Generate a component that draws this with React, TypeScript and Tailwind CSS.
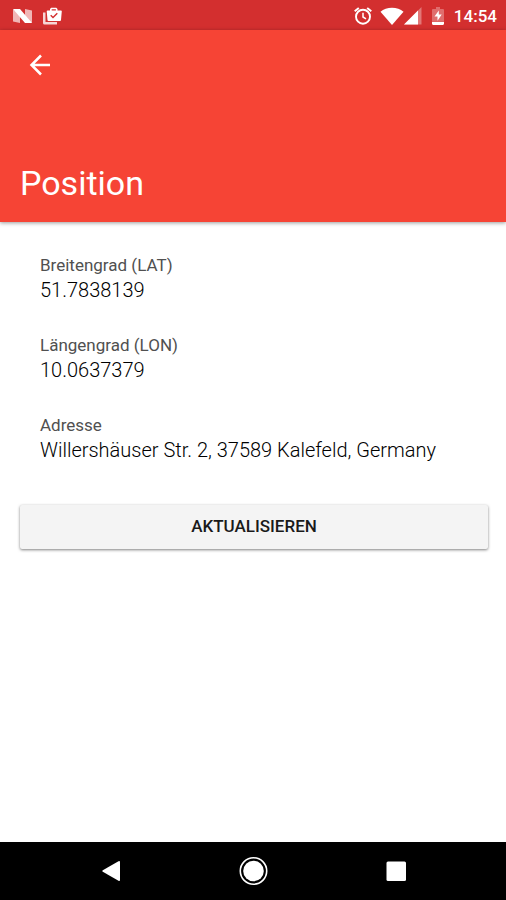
import type { ReactNode } from 'react'

// ── Data ──────────────────────────────────────────────────────────────────────

const fields = [
  { label: 'Breitengrad (LAT)', value: '51.7838139' },
  { label: 'Längengrad (LON)', value: '10.0637379' },
  { label: 'Adresse', value: 'Willershäuser Str. 2, 37589 Kalefeld, Germany' },
]

// ── Status bar ────────────────────────────────────────────────────────────────

function NougatIcon() {
  return (
    <svg viewBox="0 0 20 16" className="h-4 w-5" fill="white" aria-hidden="true">
      <path d="M0 1.500 7 5v10l-7-1.500zM12 1l7 1.500V15l-7-4z" opacity="0.65" />
      <path d="M0 1h7l12 14h-7z" />
    </svg>
  )
}

function ShopIcon() {
  return (
    <svg viewBox="0 0 20 18" className="h-[18px] w-5" fill="white" aria-hidden="true">
      <path d="M0 5.500h2.500V15H14v2.500H1.500A1.500 1.500 0 0 1 0 16z" opacity="0.8" />
      <path
        fillRule="evenodd"
        d="M4.500 3.500H7V2L8.200.8h5.100L14.500 2v1.500h3.500a.8.8 0 0 1 .8.8L18 13a1 1 0 0 1-1 1H5.500a1 1 0 0 1-1-1L3.700 4.300a.8.8 0 0 1 .8-.8zM8.700 2.200v1.300h4.200V2.200zM7.200 8.800l2.800 2.700 4.800-4.700-1-1L10 9.500 8.200 7.800z"
      />
    </svg>
  )
}

function AlarmIcon() {
  return (
    <svg viewBox="0 0 18 18" className="h-[18px] w-[18px]" fill="none" stroke="white" aria-hidden="true">
      <circle cx="9" cy="9.700" r="7" strokeWidth="1.900" />
      <path d="M9 5.700V10l3 1.900" strokeWidth="1.500" />
      <path d="M.7 4.300 4.800.9M17.300 4.300 13.200.9" strokeWidth="1.900" />
    </svg>
  )
}

function WifiIcon() {
  return (
    <svg viewBox="0 0 24 18" className="h-[18px] w-6" fill="white" aria-hidden="true">
      <path d="M.5 4.700C3.500 2.200 7.500.7 12 .7s8.500 1.500 11.500 4L12 18z" />
    </svg>
  )
}

function SignalIcon() {
  return (
    <svg viewBox="0 0 18 18" className="h-[18px] w-[18px]" fill="white" aria-hidden="true">
      <path d="M0 17.500 17.500 0v17.500z" opacity="0.35" />
      <path d="M0 17.500 14 3.500v14z" />
    </svg>
  )
}

function BatteryIcon() {
  return (
    <svg viewBox="0 0 12 18" className="h-[18px] w-3" fill="white" aria-hidden="true">
      <path d="M0 14V3.200C0 2.500.5 2 1.200 2H4V0h4v2h2.800c.7 0 1.200.5 1.200 1.200V14z" opacity="0.3" />
      <path d="M6.800 3.500 2.500 9.500h3v4.200l4.200-6.200H6.800z" />
      <path d="M0 14.700h12v2.100c0 .7-.5 1.200-1.200 1.200H1.200C.5 18 0 17.500 0 16.800z" />
    </svg>
  )
}

function StatusBar() {
  return (
    <div className="flex h-[30px] items-center justify-between bg-[#d32f2f] pl-[13px] pr-[9px] pt-px text-white">
      <div className="flex items-center gap-[10px]">
        <NougatIcon />
        <ShopIcon />
      </div>
      <div className="flex items-center">
        <AlarmIcon />
        <span className="ml-2 flex">
          <WifiIcon />
          <SignalIcon />
        </span>
        <span className="ml-[10px]">
          <BatteryIcon />
        </span>
        <time className="ml-[10px] text-[17px] leading-6 font-medium">14:54</time>
      </div>
    </div>
  )
}

// ── Navigation bar ────────────────────────────────────────────────────────────

function NavButton({ label, children }: { label: string; children: ReactNode }) {
  return (
    <button type="button" aria-label={label} className="flex w-[142px] items-center justify-center">
      <svg viewBox="0 0 30 30" className="h-[30px] w-[30px]" fill="white" aria-hidden="true">
        {children}
      </svg>
    </button>
  )
}

function NavigationBar() {
  return (
    <nav className="flex h-[58px] justify-center bg-black">
      <NavButton label="Zurück">
        <path d="M6.800 14.200 22.500 5.200q1.500-.7 1.500 1v17.600q0 1.700-1.500 1L6.800 15.800q-1.200-.8 0-1.600z" />
      </NavButton>
      <NavButton label="Startbildschirm">
        <circle cx="15.500" cy="15" r="13.200" fill="none" stroke="white" strokeWidth="1.600" />
        <circle cx="15.500" cy="15" r="10.300" />
      </NavButton>
      <NavButton label="Letzte Apps">
        <rect x="6.500" y="5.500" width="19.500" height="19.500" rx="1.500" />
      </NavButton>
    </nav>
  )
}

// ── Screen ────────────────────────────────────────────────────────────────────

export default function App() {
  return (
    <div className="flex min-h-screen flex-col bg-white font-['Roboto',sans-serif] text-black">
      <StatusBar />

      <header className="z-10 flex h-48 flex-col justify-between bg-[#f64435] px-5 pt-[15px] pb-[19px] text-white shadow-[0_1px_4px_rgba(0,0,0,0.4)]">
        <button type="button" aria-label="Zurück" className="flex h-10 w-10 items-center justify-center">
          <svg
            viewBox="0 0 24 24"
            className="h-6 w-6"
            fill="none"
            stroke="white"
            strokeWidth="2.500"
            aria-hidden="true"
          >
            <path d="M22 12H4M13 2.500 3.500 12l9.500 9.500" />
          </svg>
        </button>
        <h1 className="text-[34px] leading-10">Position</h1>
      </header>

      <main className="flex-1 pt-[31px] pr-[18px] pl-5">
        <dl className="flex flex-col gap-[30px] px-5">
          {fields.map((field) => (
            <div key={field.label}>
              <dt className="text-[17px] leading-6 text-[#505050]">{field.label}</dt>
              <dd className="text-xl leading-[26px] font-light">{field.value}</dd>
            </div>
          ))}
        </dl>

        <button
          type="button"
          className="mt-[42px] h-11 w-full rounded-xs bg-[#f4f4f4] pb-0.5 text-[17px] leading-6 font-medium text-[#1a1a1a] uppercase shadow-[0_1px_3px_rgba(0,0,0,0.5)]"
        >
          Aktualisieren
        </button>
      </main>

      <NavigationBar />
    </div>
  )
}
